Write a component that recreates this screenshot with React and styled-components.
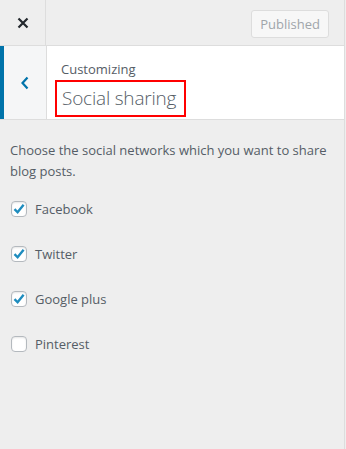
import styled, { createGlobalStyle } from "styled-components";

const GlobalStyle = createGlobalStyle`
  html, body {
    margin: 0;
    padding: 0;
    background: #eeeeee;
  }
  body {
    font-family: "Open Sans", "Noto Sans", sans-serif;
    color: #555d66;
  }
`;

const Sidebar = styled.div`
  width: 344px;
  height: 449px;
  background: #eeeeee;
  border-right: 1px solid #dddddd;
`;

const TopBar = styled.div`
  display: flex;
  align-items: center;
  height: 45px;
  border-bottom: 1px solid #dddddd;
`;

const CloseButton = styled.div`
  width: 45px;
  height: 45px;
  display: flex;
  align-items: center;
  justify-content: center;
  border-right: 1px solid #dddddd;
  color: #23282d;
`;

const TopSpacer = styled.div`
  flex: 1;
`;

const PublishButton = styled.div`
  margin: 2px 15px 0 0;
  height: 26px;
  padding: 0 8px;
  display: flex;
  align-items: center;
  border: 1px solid #dddddd;
  border-radius: 3px;
  background: #f7f7f7;
  color: #a0a5aa;
  font-size: 13px;
`;

const Header = styled.div`
  display: flex;
  height: 73px;
  background: #ffffff;
  border-bottom: 1px solid #dddddd;
`;

const BackButton = styled.div`
  width: 42px;
  border-left: 4px solid #0073aa;
  background: #f5f6f7;
  border-right: 1px solid #dddddd;
  display: flex;
  align-items: center;
  justify-content: center;
  color: #0073aa;
`;

const HeaderText = styled.div`
  display: flex;
  flex-direction: column;
  padding: 14px 0 0 14px;
`;

const Crumb = styled.span`
  font-size: 13px;
  line-height: 18px;
  color: #555d66;
`;

const Title = styled.h3`
  margin: 2px 0 0 -6px;
  padding: 3px 8px 4px 5px;
  font-size: 19px;
  font-weight: 300;
  line-height: 26px;
  letter-spacing: -0.2px;
  color: #555d66;
  border: 2px solid #ff0000;
  align-self: flex-start;
`;

const Content = styled.div`
  padding: 20px 10px 0 10px;
`;

const Description = styled.p`
  margin: 0 0 18px;
  font-size: 13px;
  line-height: 21px;
  color: #555d66;
`;

const OptionList = styled.div`
  display: flex;
  flex-direction: column;
  gap: 27px;
`;

const Option = styled.label`
  display: flex;
  align-items: center;
  gap: 8px;
  height: 18px;
  font-size: 13px;
  color: #555d66;
`;

const Box = styled.span`
  width: 16px;
  height: 16px;
  box-sizing: border-box;
  border: 1px solid #b4b9be;
  border-radius: 4px;
  background: #ffffff;
  box-shadow: inset 0 1px 2px rgba(0, 0, 0, 0.1);
  display: flex;
  align-items: center;
  justify-content: center;
  margin-left: 1px;
`;

const CheckIcon = () => (
  <svg width="14" height="14" viewBox="0 0 14 14">
    <path d="M2.5 7.2 L5.6 10.3 L11.6 2.8" fill="none" stroke="#1e8cbe" strokeWidth="2.4" strokeLinejoin="miter" />
  </svg>
);

const networks = [
  { name: "Facebook", checked: true },
  { name: "Twitter", checked: true },
  { name: "Google plus", checked: true },
  { name: "Pinterest", checked: false },
];

export default function App() {
  return (
    <>
      <GlobalStyle />
      <Sidebar>
        <TopBar>
          <CloseButton>
            <svg width="12" height="12" viewBox="0 0 12 12">
              <path d="M1.5 1.5 L10.5 10.5 M10.5 1.5 L1.5 10.5" stroke="#23282d" strokeWidth="2.2" />
            </svg>
          </CloseButton>
          <TopSpacer />
          <PublishButton>Published</PublishButton>
        </TopBar>
        <Header>
          <BackButton>
            <svg width="10" height="14" viewBox="0 0 10 14">
              <path d="M7.5 1.5 L2.5 7 L7.5 12.5" fill="none" stroke="#0073aa" strokeWidth="2.2" />
            </svg>
          </BackButton>
          <HeaderText>
            <Crumb>Customizing</Crumb>
            <Title>Social sharing</Title>
          </HeaderText>
        </Header>
        <Content>
          <Description>
            Choose the social networks which you want to share blog posts.
          </Description>
          <OptionList>
            {networks.map((n) => (
              <Option key={n.name}>
                <Box>{n.checked && <CheckIcon />}</Box>
                {n.name}
              </Option>
            ))}
          </OptionList>
        </Content>
      </Sidebar>
    </>
  );
}
